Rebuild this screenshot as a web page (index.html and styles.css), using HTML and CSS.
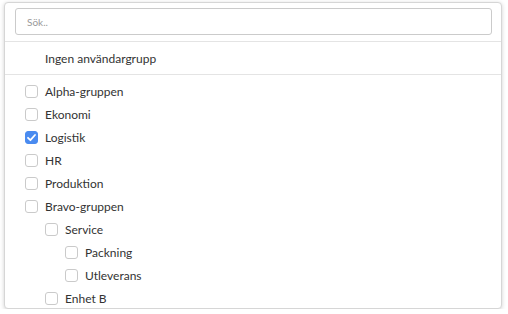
FILE: index.html
```html
<!DOCTYPE html>
<html lang="sv">
  <head>
    <meta charset="UTF-8" />
    <meta name="viewport" content="width=device-width, initial-scale=1.0" />
    <title>Användargrupper</title>
    <link rel="stylesheet" href="styles.css">
  </head>
  <body>
    <div class="picker">
      <!-- Search -->
      <div class="picker-search">
        <input type="text" class="search-input" placeholder="Sök.." />
      </div>

      <div class="picker-none">Ingen användargrupp</div>

      <!-- Group tree -->
      <ul class="group-list">
        <li class="group-item"><span class="box"></span>Alpha-gruppen</li>
        <li class="group-item"><span class="box"></span>Ekonomi</li>
        <li class="group-item"><span class="box checked"></span>Logistik</li>
        <li class="group-item"><span class="box"></span>HR</li>
        <li class="group-item"><span class="box"></span>Produktion</li>
        <li class="group-item"><span class="box"></span>Bravo-gruppen</li>
        <li class="group-item level-2"><span class="box"></span>Service</li>
        <li class="group-item level-3"><span class="box"></span>Packning</li>
        <li class="group-item level-3"><span class="box"></span>Utleverans</li>
        <li class="group-item level-2"><span class="box"></span>Enhet B</li>
      </ul>
    </div>
  </body>
</html>
```

FILE: styles.css
```css
* {
  margin: 0;
  padding: 0;
  box-sizing: border-box;
}

body,
html {
  font-family: Lato, "Open Sans", sans-serif;
  background: #fff;
  color: #333;
}

body {
  padding: 2px 6px 0 4px;
}

.picker {
  height: 307px;
  background: #fff;
  border: 1px solid #d6d6d6;
  border-radius: 4px;
  box-shadow: 0 1px 4px rgba(0, 0, 0, 0.18);
  overflow: hidden;
}

.picker-search {
  padding: 5px 9px 6px 10px;
  border-bottom: 1px solid #e4e4e4;
}

.search-input {
  display: block;
  width: 100%;
  height: 27px;
  border: 1px solid #cbcbcb;
  border-radius: 3px;
  padding: 0 11px;
  font-family: Lato, sans-serif;
  font-size: 10px;
  color: #333;
  outline: none;
}

.search-input::placeholder {
  color: #999;
}

.picker-none {
  height: 33px;
  line-height: 33px;
  padding-left: 40px;
  font-size: 12px;
  border-bottom: 1px solid #e4e4e4;
}

.group-list {
  list-style: none;
  padding: 5px 0 0 20px;
}

.group-item {
  display: flex;
  align-items: center;
  height: 23px;
  font-size: 12px;
}

.group-item.level-2 {
  padding-left: 20px;
}

.group-item.level-3 {
  padding-left: 40px;
}

.box {
  flex: none;
  width: 13px;
  height: 13px;
  margin-right: 7px;
  border: 1px solid #cacaca;
  border-radius: 3px;
  background: #fff;
}

.box.checked {
  border-color: #4a8bf0;
  background: #4a8bf0 url("data:image/svg+xml;utf8,<svg xmlns='http://www.w3.org/2000/svg' viewBox='0 0 13 13'><path d='M3 6.8l2.4 2.4L10 4' fill='none' stroke='white' stroke-width='1.8' stroke-linecap='round' stroke-linejoin='round'/></svg>") center / 13px 13px no-repeat;
}
```
